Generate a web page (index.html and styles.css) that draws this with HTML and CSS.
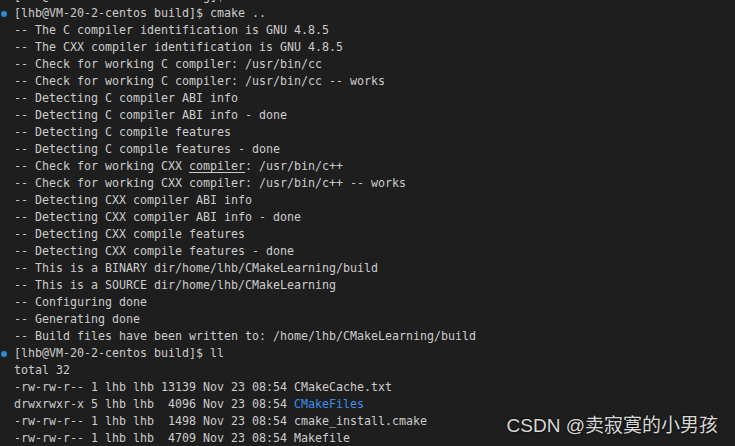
FILE: index.html
```html
<!DOCTYPE html>
<html lang="en">
<head>
    <meta charset="UTF-8">
    <title>terminal</title>
    <link rel="stylesheet" href="styles.css">
</head>
<body>
<div class="terminal">
    <div class="line"><span class="gutter"></span><span class="text">[lhb@VM-20-2-centos Learning]$ mkdir build</span></div>
    <div class="line"><span class="gutter"><i class="dot"></i></span><span class="text">[lhb@VM-20-2-centos build]$ cmake ..</span></div>
    <div class="line"><span class="gutter"></span><span class="text">-- The C compiler identification is GNU 4.8.5</span></div>
    <div class="line"><span class="gutter"></span><span class="text">-- The CXX compiler identification is GNU 4.8.5</span></div>
    <div class="line"><span class="gutter"></span><span class="text">-- Check for working C compiler: /usr/bin/cc</span></div>
    <div class="line"><span class="gutter"></span><span class="text">-- Check for working C compiler: /usr/bin/cc -- works</span></div>
    <div class="line"><span class="gutter"></span><span class="text">-- Detecting C compiler ABI info</span></div>
    <div class="line"><span class="gutter"></span><span class="text">-- Detecting C compiler ABI info - done</span></div>
    <div class="line"><span class="gutter"></span><span class="text">-- Detecting C compile features</span></div>
    <div class="line"><span class="gutter"></span><span class="text">-- Detecting C compile features - done</span></div>
    <div class="line"><span class="gutter"></span><span class="text">-- Check for working CXX <u class="link">compiler</u>: /usr/bin/c++</span></div>
    <div class="line"><span class="gutter"></span><span class="text">-- Check for working CXX compiler: /usr/bin/c++ -- works</span></div>
    <div class="line"><span class="gutter"></span><span class="text">-- Detecting CXX compiler ABI info</span></div>
    <div class="line"><span class="gutter"></span><span class="text">-- Detecting CXX compiler ABI info - done</span></div>
    <div class="line"><span class="gutter"></span><span class="text">-- Detecting CXX compile features</span></div>
    <div class="line"><span class="gutter"></span><span class="text">-- Detecting CXX compile features - done</span></div>
    <div class="line"><span class="gutter"></span><span class="text">-- This is a BINARY dir/home/lhb/CMakeLearning/build</span></div>
    <div class="line"><span class="gutter"></span><span class="text">-- This is a SOURCE dir/home/lhb/CMakeLearning</span></div>
    <div class="line"><span class="gutter"></span><span class="text">-- Configuring done</span></div>
    <div class="line"><span class="gutter"></span><span class="text">-- Generating done</span></div>
    <div class="line"><span class="gutter"></span><span class="text">-- Build files have been written to: /home/lhb/CMakeLearning/build</span></div>
    <div class="line"><span class="gutter"><i class="dot"></i></span><span class="text">[lhb@VM-20-2-centos build]$ ll</span></div>
    <div class="line"><span class="gutter"></span><span class="text">total 32</span></div>
    <div class="line"><span class="gutter"></span><span class="text">-rw-rw-r-- 1 lhb lhb 13139 Nov 23 08:54 CMakeCache.txt</span></div>
    <div class="line"><span class="gutter"></span><span class="text">drwxrwxr-x 5 lhb lhb  4096 Nov 23 08:54 <span class="dir">CMakeFiles</span></span></div>
    <div class="line"><span class="gutter"></span><span class="text">-rw-rw-r-- 1 lhb lhb  1498 Nov 23 08:54 cmake_install.cmake</span></div>
    <div class="line"><span class="gutter"></span><span class="text">-rw-rw-r-- 1 lhb lhb  4709 Nov 23 08:54 Makefile</span></div>
</div>
<div class="watermark">CSDN @卖寂寞的小男孩</div>
</body>
</html>
```
FILE: styles.css
```css
html, body {
    height: 100%;
}

body {
    margin: 0;
    background-color: #1e1e1e;
    overflow: hidden;
    position: relative;
}

.terminal {
    margin-top: -12px;
    font-family: "DejaVu Sans Mono", monospace;
    font-size: 11.63px;
    line-height: 17px;
    color: #cccccc;
}

.line {
    display: flex;
    align-items: center;
    height: 17px;
}

.gutter {
    width: 14px;
    flex: none;
    display: flex;
    align-items: center;
}

.dot {
    width: 6px;
    height: 6px;
    margin-left: 1px;
    border-radius: 50%;
    background-color: #2a8ccc;
}

.text {
    white-space: pre;
}

.link {
    text-decoration: underline;
    text-underline-offset: 2px;
}

.dir {
    color: #3b8eea;
}

.watermark {
    position: absolute;
    right: 17px;
    bottom: 9px;
    font-family: "Liberation Sans", "Noto Sans CJK SC", sans-serif;
    font-size: 19px;
    color: #d8d8d8;
    text-shadow: 0 0 2px #000;
}
```
